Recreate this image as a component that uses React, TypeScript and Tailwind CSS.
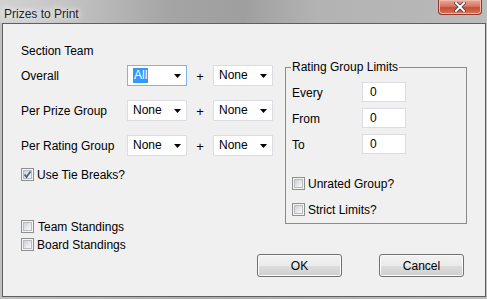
import React from "react";

const font = { fontFamily: '"Liberation Sans", Arial, sans-serif' };

function Arrow() {
  return (
    <svg width="7" height="4" viewBox="0 0 7 4" className="block">
      <polygon points="0,0 7,0 3.5,4" fill="#000" />
    </svg>
  );
}

function Combo({ value, focused }: { value: string; focused?: boolean }) {
  return (
    <div
      className={`flex h-[21px] w-[60px] items-center justify-between bg-white pl-[5px] pr-[5px] ${
        focused ? "border border-[#7eb4ea]" : "border border-[#dcdde3]"
      }`}
    >
      {focused ? (
        <span className="bg-[#3399ff] px-[1px] leading-[15px] text-white">{value}</span>
      ) : (
        <span className="leading-[15px] text-black">{value}</span>
      )}
      <Arrow />
    </div>
  );
}

function Check({ checked }: { checked?: boolean }) {
  return (
    <div className="relative h-[13px] w-[13px] shrink-0 border border-[#8e8f8f] bg-[#f4f4f4] p-[1px]">
      <div className="h-full w-full border border-[#b9bbbe] bg-[linear-gradient(135deg,#cdd0d5,#e9eaec_60%,#f7f7f7)]">
        {checked && (
          <svg width="9" height="9" viewBox="0 0 9 9" className="absolute left-[1px] top-[1px]">
            <path d="M1.5 4.5 L3.5 7 L7.5 1.5" stroke="#4a5f97" strokeWidth="1.8" fill="none" />
          </svg>
        )}
      </div>
    </div>
  );
}

function NumInput() {
  return (
    <div className="flex h-[20px] w-[44px] items-center border border-[#dcdde3] bg-white pl-[7px] leading-[15px]">
      0
    </div>
  );
}

function Button({ label }: { label: string }) {
  return (
    <div className="flex h-[23px] w-[85px] items-center justify-center rounded-[3px] border border-[#707070] bg-[linear-gradient(to_bottom,#f2f2f2_0%,#ebebeb_50%,#dddddd_51%,#cfcfcf_100%)] shadow-[inset_0_0_0_1px_#fcfcfc]">
      {label}
    </div>
  );
}

export default function App() {
  return (
    <div
      style={font}
      className="flex h-[299px] w-[487px] flex-col bg-[linear-gradient(to_right,#c0c0c0,#acacac_40%,#b4b4b4_70%,#bdbdbd)] text-[12px] text-black"
    >
      {/* Title bar */}
      <div className="flex h-[23px] shrink-0 items-start justify-between bg-[linear-gradient(to_right,#d2d2d2_0%,#c6c6c6_12%,#a4a4a4_35%,#9f9f9f_50%,#b3b3b3_65%,#b6b6b6_85%,#bcbcbc_100%)]">
        <div className="pl-[4px] pt-[6px] leading-[16px] text-[#1e1e1e] [text-shadow:0_0_6px_#ffffff,0_0_10px_#ffffff]">
          Prizes to Print
        </div>
        <div className="mr-[5px] flex h-[15px] w-[44px] items-center justify-center rounded-b-[4px] border border-t-0 border-[#8b3a2b] bg-[linear-gradient(to_bottom,#e9a898_0%,#d7765f_45%,#c44f34_55%,#d6775c_100%)] shadow-[inset_0_0_0_1px_#f0b9a8]">
          <svg width="12" height="10" viewBox="0 0 12 10">
            <path d="M2 1 L10 9 M10 1 L2 9" stroke="#3a3a4a" strokeWidth="3.6" strokeLinecap="square" />
            <path d="M2 1 L10 9 M10 1 L2 9" stroke="#ffffff" strokeWidth="2" strokeLinecap="square" />
          </svg>
        </div>
      </div>

      {/* Content panel */}
      <div className="ml-[2px] h-[274px] w-[484px] shrink-0 border border-[#5f5f5f] bg-[#f0f0f0]">
        <div className="flex pl-[18px]">
          {/* Left column */}
          <div className="flex w-[264px] flex-col">
            <div className="mt-[19px] h-[16px] leading-[16px]">Section Team</div>

            {[
              { label: "Overall", first: "All", focused: true, mt: "mt-[6px]" },
              { label: "Per Prize Group", first: "None", focused: false, mt: "mt-[14px]" },
              { label: "Per Rating Group", first: "None", focused: false, mt: "mt-[14px]" },
            ].map((r) => (
              <div key={r.label} className={`flex h-[21px] items-center ${r.mt}`}>
                <div className="w-[106px] leading-[16px]">{r.label}</div>
                <Combo value={r.first} focused={r.focused} />
                <div className="flex w-[26px] justify-center pt-[2px] text-[13px]">+</div>
                <Combo value="None" />
              </div>
            ))}

            <div className="mt-[12px] flex h-[13px] items-center gap-[3px]">
              <Check checked />
              <span className="leading-[16px]">Use Tie Breaks?</span>
            </div>

            <div className="mt-[39px] flex h-[13px] items-center gap-[4px]">
              <Check />
              <span className="leading-[16px]">Team Standings</span>
            </div>
            <div className="mt-[5px] flex h-[13px] items-center gap-[3px]">
              <Check />
              <span className="leading-[16px]">Board Standings</span>
            </div>
          </div>

          {/* Right group box */}
          <div className="relative mt-[43px] flex h-[157px] w-[182px] flex-col self-start border border-[#8a8a8a] pl-[6px]">
            <span className="absolute left-[5px] top-[-9px] bg-[#f0f0f0] px-[1px] leading-[16px]">
              Rating Group Limits
            </span>
            {[
              { label: "Every", mt: "mt-[14px]" },
              { label: "From", mt: "mt-[6px]" },
              { label: "To", mt: "mt-[6px]" },
            ].map((r) => (
              <div key={r.label} className={`flex h-[20px] items-center ${r.mt}`}>
                <div className="w-[70px] pt-[2px] leading-[16px]">{r.label}</div>
                <NumInput />
              </div>
            ))}
            <div className="mt-[23px] flex h-[13px] items-center gap-[3px]">
              <Check />
              <span className="leading-[16px]">Unrated Group?</span>
            </div>
            <div className="mt-[13px] flex h-[13px] items-center gap-[3px]">
              <Check />
              <span className="leading-[16px]">Strict Limits?</span>
            </div>
          </div>
        </div>

        {/* Buttons */}
        <div className="mt-[3px] flex gap-[37px] pl-[254px]">
          <Button label="OK" />
          <Button label="Cancel" />
        </div>
      </div>
    </div>
  );
}
